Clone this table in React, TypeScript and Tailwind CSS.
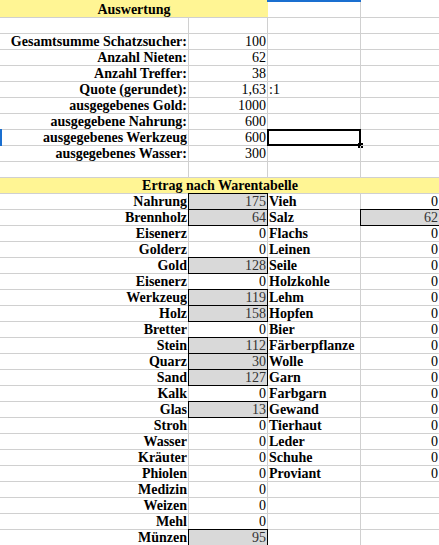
type Cell = {
  text?: string;
  align?: "left" | "right" | "center";
  bold?: boolean;
  fill?: boolean;
  span?: 2 | 4;
  yellow?: boolean;
  selected?: boolean;
  headMark?: boolean;
  rowMark?: boolean;
};

const label = (text: string): Cell => ({ text, align: "right", bold: true });
const num = (text: string, fill = false): Cell => ({ text, align: "right", fill });
const ware = (text: string): Cell => ({ text, align: "left", bold: true });

// obere Auswertung (Spalten A-D)
const summary: Cell[][] = [
  [{ text: "Auswertung", span: 2, yellow: true, bold: true, align: "center" }, { headMark: true }, {}],
  [{}, {}, {}, {}],
  [label("Gesamtsumme Schatzsucher:"), num("100"), {}, {}],
  [label("Anzahl Nieten:"), num("62"), {}, {}],
  [label("Anzahl Treffer:"), num("38"), {}, {}],
  [label("Quote (gerundet):"), num("1,63"), { text: ":1", align: "left" }, {}],
  [label("ausgegebenes Gold:"), num("1000"), {}, {}],
  [label("ausgegebene Nahrung:"), num("600"), {}, {}],
  [{ ...label("ausgegebenes Werkzeug"), rowMark: true }, num("600"), { selected: true }, {}],
  [label("ausgegebenes Wasser:"), num("300"), {}, {}],
  [{}, {}, {}, {}],
  [{ text: "Ertrag nach Warentabelle", span: 4, yellow: true, bold: true, align: "center" }],
];

const left: [string, string][] = [
  ["Nahrung", "175"],
  ["Brennholz", "64"],
  ["Eisenerz", "0"],
  ["Golderz", "0"],
  ["Gold", "128"],
  ["Eisenerz", "0"],
  ["Werkzeug", "119"],
  ["Holz", "158"],
  ["Bretter", "0"],
  ["Stein", "112"],
  ["Quarz", "30"],
  ["Sand", "127"],
  ["Kalk", "0"],
  ["Glas", "13"],
  ["Stroh", "0"],
  ["Wasser", "0"],
  ["Kräuter", "0"],
  ["Phiolen", "0"],
  ["Medizin", "0"],
  ["Weizen", "0"],
  ["Mehl", "0"],
  ["Münzen", "95"],
];

const right: [string, string][] = [
  ["Vieh", "0"],
  ["Salz", "62"],
  ["Flachs", "0"],
  ["Leinen", "0"],
  ["Seile", "0"],
  ["Holzkohle", "0"],
  ["Lehm", "0"],
  ["Hopfen", "0"],
  ["Bier", "0"],
  ["Färberpflanze", "0"],
  ["Wolle", "0"],
  ["Garn", "0"],
  ["Farbgarn", "0"],
  ["Gewand", "0"],
  ["Tierhaut", "0"],
  ["Leder", "0"],
  ["Schuhe", "0"],
  ["Proviant", "0"],
];

// Werte ungleich 0 sind grau hinterlegt und umrandet
const goods: Cell[][] = left.map(([name, value], i) => {
  const r = right[i];
  return [
    label(name),
    num(value, value !== "0"),
    r ? ware(r[0]) : {},
    r ? num(r[1], r[1] !== "0") : {},
  ];
});

function GridCell({ cell }: { cell: Cell }) {
  const alignClass =
    cell.align === "right" ? "justify-end pr-px" : cell.align === "center" ? "justify-center" : "justify-start pl-px";
  const span = cell.span === 4 ? "col-span-4" : cell.span === 2 ? "col-span-2" : "";
  let tone = "border-r border-b border-[#d0d0d0]";
  if (cell.yellow) tone = "bg-[#fff594] border-b border-[#d0d0d0]";
  if (cell.fill)
    tone =
      "bg-[#d9d9d9] border-r border-b border-black text-[#333] shadow-[-1px_0_0_0_#000,0_-1px_0_0_#000,-1px_-1px_0_0_#000]";

  return (
    <div
      className={`relative flex items-end overflow-visible whitespace-nowrap leading-[15px] ${span} ${alignClass} ${tone} ${
        cell.bold ? "font-bold" : ""
      }`}
    >
      {cell.text}
      {cell.headMark ? <span className="absolute left-[-1px] right-[-1px] top-0 h-[2px] bg-[#1a6fd0]" /> : null}
      {cell.rowMark ? <span className="absolute bottom-[-1px] left-0 top-[-1px] w-[2px] bg-[#1a6fd0]" /> : null}
      {cell.selected ? (
        <span className="absolute -bottom-px -left-px -right-px -top-px border-2 border-black">
          <span className="absolute -bottom-[4px] -right-[4px] h-[5px] w-[5px] bg-black" />
        </span>
      ) : null}
    </div>
  );
}

export default function App() {
  const rows = [...summary, ...goods];
  return (
    <div className="h-[545px] w-[439px] overflow-hidden bg-white">
      <div
        className="grid grid-cols-[189px_79px_93px_79px] grid-rows-[18px] auto-rows-[16px] text-[14px] text-black"
        style={{ fontFamily: '"Liberation Serif", serif' }}
      >
        {rows.map((row, r) => row.map((cell, c) => <GridCell key={`${r}-${c}`} cell={cell} />))}
      </div>
    </div>
  );
}
